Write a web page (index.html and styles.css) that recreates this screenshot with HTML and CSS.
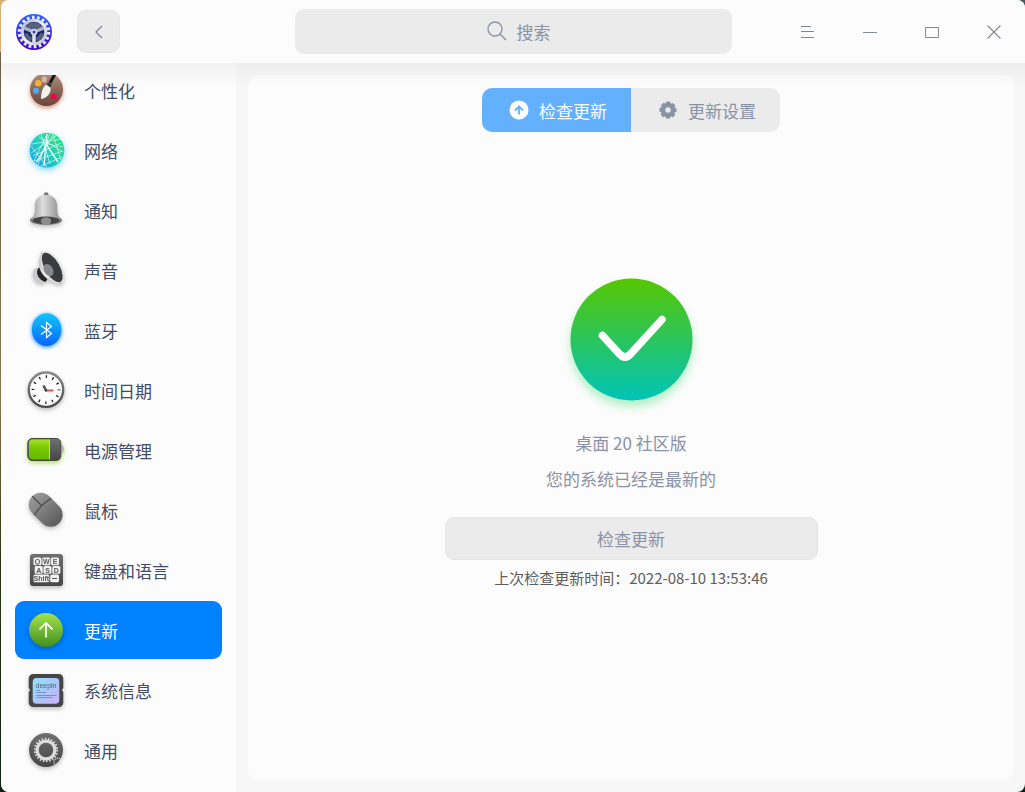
FILE: index.html
```html
<!DOCTYPE html>
<html lang="zh-CN">

    <head>
        <meta charset="utf-8" />
        <meta name="viewport" content="width=device-width, initial-scale=1.0" />
        <title>控制中心</title>

        <link rel="stylesheet" href="styles.css">
    </head>

    <body>
        <!-- Degradados compartidos -->
        <svg class="defs" aria-hidden="true">
            <defs>
                <linearGradient id="g-logo" x2="0" y2="1"><stop offset="0" stop-color="#2a63ff"/><stop offset="1" stop-color="#4a00c8"/></linearGradient>
                <linearGradient id="g-metal" x2="1" y2="1"><stop offset="0" stop-color="#a9b3c4"/><stop offset=".5" stop-color="#eef2f8"/><stop offset="1" stop-color="#b4bccb"/></linearGradient>
                <linearGradient id="g-paleta" x2="0" y2="1"><stop offset="0" stop-color="#ab8e79"/><stop offset="1" stop-color="#6b443a"/></linearGradient>
                <linearGradient id="g-red" x1="1" x2="0" y2="1"><stop offset="0" stop-color="#2fe06f"/><stop offset=".5" stop-color="#25cfb8"/><stop offset="1" stop-color="#159cf5"/></linearGradient>
                <linearGradient id="g-campana" x2="1" y2="0"><stop offset="0" stop-color="#8d8d8d"/><stop offset=".4" stop-color="#dedede"/><stop offset="1" stop-color="#858585"/></linearGradient>
                <linearGradient id="g-bocina" x2="1" y2="1"><stop offset="0" stop-color="#a8a8a8"/><stop offset=".5" stop-color="#efefef"/><stop offset="1" stop-color="#a0a0a0"/></linearGradient>
                <linearGradient id="g-bluetooth" x2="0" y2="1"><stop offset="0" stop-color="#12c6fb"/><stop offset="1" stop-color="#0765ff"/></linearGradient>
                <linearGradient id="g-aro" x2="0" y2="1"><stop offset="0" stop-color="#8a8a8a"/><stop offset="1" stop-color="#4a4a4a"/></linearGradient>
                <linearGradient id="g-pila" x2="0" y2="1"><stop offset="0" stop-color="#a5e02c"/><stop offset=".45" stop-color="#76c900"/><stop offset="1" stop-color="#65b800"/></linearGradient>
                <linearGradient id="g-gris" x2="0" y2="1"><stop offset="0" stop-color="#9a9a9a"/><stop offset="1" stop-color="#5c5c5c"/></linearGradient>
                <linearGradient id="g-oscuro" x2="0" y2="1"><stop offset="0" stop-color="#707070"/><stop offset="1" stop-color="#454545"/></linearGradient>
                <linearGradient id="g-verde" x2="0" y2="1"><stop offset="0" stop-color="#a5e34e"/><stop offset="1" stop-color="#3f8f1f"/></linearGradient>
                <linearGradient id="g-pantalla" x2="1" y2="1"><stop offset="0" stop-color="#8fe3fb"/><stop offset=".5" stop-color="#a9c8fa"/><stop offset="1" stop-color="#ceb2fb"/></linearGradient>
                <linearGradient id="g-listo" x2="0" y2="1"><stop offset="0" stop-color="#56c600"/><stop offset="1" stop-color="#00c4b8"/></linearGradient>
            </defs>
        </svg>

        <div class="ventana">
            <header class="barra">
                <div class="barra_izq">
                    <svg class="logo" viewBox="0 0 36 36" aria-hidden="true">
                        <circle cx="18" cy="18" r="18" fill="url(#g-logo)"/>
                        <circle cx="18" cy="18" r="14.6" fill="none" stroke="#e6eaf8" stroke-width="3.4" stroke-dasharray="2.7 2.396"/>
                        <circle cx="18" cy="18" r="11.8" fill="#1d2370" stroke="url(#g-metal)" stroke-width="3"/>
                        <path d="M9.5 13a10 10 0 0 1 17 0l-4 2.500a8 8 0 0 0-9 0z" fill="#56627c"/>
                        <path d="M8.500 19a10 10 0 0 0 6.500 8.500l1-4a7 7 0 0 1-4-4zM27.500 19a10 10 0 0 1-6.500 8.500l-1-4a7 7 0 0 0 4-4z" fill="#56627c"/>
                        <path d="M18 18L8 14M18 18l10-4" stroke="#a9b2c6" stroke-width="3.200"/>
                        <path d="M18 18v10.500" stroke="#dce2ec" stroke-width="3.600"/>
                        <circle cx="18" cy="18" r="3.400" fill="#c9d0df"/>
                        <circle cx="18" cy="18" r="1.300" fill="#26308e"/>
                    </svg>
                    <button class="boton_atras" aria-label="返回">
                        <svg width="10" height="14" viewBox="0 0 10 14"><path d="M8 1L2 7l6 6" fill="none" stroke="currentColor" stroke-width="1.3"/></svg>
                    </button>
                </div>

                <div class="buscador">
                    <svg class="buscador_icono" width="20" height="20" viewBox="0 0 20 20" aria-hidden="true"><circle cx="8" cy="8" r="7" fill="none" stroke="currentColor" stroke-width="1.3"/><path d="M13 13l6 6" stroke="currentColor" stroke-width="1.4"/></svg>
                    <input class="buscador_campo" type="text" placeholder="搜索" aria-label="搜索">
                </div>

                <div class="controles">
                    <button class="control" aria-label="菜单"><svg width="14" height="14" viewBox="0 0 14 14"><path d="M0 1.500h10M0 6.500h13M0 12.500h13" stroke="currentColor"/></svg></button>
                    <button class="control" aria-label="最小化"><svg width="14" height="14" viewBox="0 0 14 14"><path d="M0 7.500h14" stroke="currentColor"/></svg></button>
                    <button class="control" aria-label="最大化"><svg width="14" height="14" viewBox="0 0 14 14"><path d="M.5 2.500h13v10H.5z" fill="none" stroke="currentColor"/></svg></button>
                    <button class="control" aria-label="关闭"><svg width="14" height="14" viewBox="0 0 14 14"><path d="M.5 .5l13 13M13.500 .5l-13 13" stroke="currentColor" stroke-width="1.100"/></svg></button>
                </div>
            </header>

            <div class="cuerpo">
                <nav class="lateral">
                    <div class="menu">
                        <a class="menu_item" href="#">
                            <svg class="menu_icono menu_icono--rojo" viewBox="0 0 40 40">
                                <circle cx="20.5" cy="19.500" r="16.500" fill="url(#g-paleta)"/>
                                <ellipse cx="18.300" cy="9.500" rx="2.600" ry="3.200" fill="#d8b3a2"/>
                                <circle cx="12.300" cy="13.300" r="3.200" fill="#f9b22e"/>
                                <circle cx="10" cy="20.700" r="3" fill="#4fabf5"/>
                                <circle cx="27.700" cy="26.700" r="3.200" fill="#e40a4a"/>
                                <path d="M15 29c0-5 1-11 5-14.500l4.500 2.800c1 5-3 11-9.500 11.700z" fill="#f6f1ea"/>
                                <path d="M20.500 14.500l2-2 3 2.200-1 2.800z" fill="#333"/>
                                <path d="M24 13l6-11" stroke="#151515" stroke-width="3"/>
                            </svg>
                            <span>个性化</span>
                        </a>
                        <a class="menu_item" href="#">
                            <svg class="menu_icono menu_icono--celeste" viewBox="0 0 40 40">
                                <circle cx="21" cy="20.300" r="17.300" fill="url(#g-red)"/>
                                <g fill="none" stroke="#e9fffb" stroke-width=".8">
                                    <path d="M15 4l9 30M24 3.500L12 35M6 14l30-5M5 23L30 6M10 33L27 5l8 25M13 7L37 22M5 16l16 21M20 6L8 31l29-10M17 13l20 4M15 36L36 27M7 26l28-13" opacity=".8"/>
                                    <path d="M21 4l-3 32M22 12L11 32M20 14l12 18" stroke-width="1.400"/>
                                </g>
                            </svg>
                            <span>网络</span>
                        </a>
                        <a class="menu_item" href="#">
                            <svg class="menu_icono" viewBox="0 0 40 40">
                                <circle cx="20.200" cy="4.500" r="2.300" fill="#777"/>
                                <ellipse cx="20" cy="30.200" rx="16" ry="4.800" fill="#777"/>
                                <path d="M4 29.500c4-2 5-6 5-13C9 8 14 5 20 5s11.200 3 11.200 11.500c0 7 .8 11 4.800 13-8 3.500-24 3.500-32 0z" fill="url(#g-campana)"/>
                                <ellipse cx="20" cy="30.300" rx="13.500" ry="3.700" fill="#444"/>
                                <ellipse cx="20" cy="31" rx="5.200" ry="3.800" fill="#8c8c8c"/>
                            </svg>
                            <span>通知</span>
                        </a>
                        <a class="menu_item" href="#">
                            <svg class="menu_icono" viewBox="0 0 40 40">
                                <path d="M8.500 18.500c-4 5-1 14.500 7.500 15l4-3-7-13z" fill="#c9cad2"/>
                                <path d="M12.500 18c-3.500 4-.5 12 7 14l2-3-6-12z" fill="#262626"/>
                                <path d="M15.500 1.500c-1.500 5-3.500 13-1.500 18 2 5.500 9 13.500 22 14.500z" fill="url(#g-bocina)"/>
                                <ellipse cx="26.200" cy="17.500" rx="8" ry="17.300" transform="rotate(-30 26.200 17.500)" fill="#3a3b3e" stroke="#e3e3e3" stroke-width="1.400"/>
                                <ellipse cx="22.500" cy="20" rx="4.500" ry="6.500" transform="rotate(-30 22.500 20)" fill="#85878b"/>
                            </svg>
                            <span>声音</span>
                        </a>
                        <a class="menu_item" href="#">
                            <svg class="menu_icono menu_icono--azul" viewBox="0 0 40 40">
                                <ellipse cx="20.600" cy="19.700" rx="14.700" ry="16.400" fill="url(#g-bluetooth)"/>
                                <path d="M15 15.500l10.500 8-5 4v-15l5 4-10.500 8" fill="none" stroke="#fff" stroke-width="1.200"/>
                            </svg>
                            <span>蓝牙</span>
                        </a>
                        <a class="menu_item" href="#">
                            <svg class="menu_icono" viewBox="0 0 40 40">
                                <circle cx="20" cy="19.700" r="17.200" fill="#fcfcfc" stroke="url(#g-aro)" stroke-width="2.400"/>
                                <circle cx="20" cy="19.700" r="13" fill="none" stroke="#222" stroke-width="2.800" stroke-dasharray="1.300 5.507" stroke-dashoffset=".65"/>
                                <path d="M20 20.500l-2.500-5" stroke="#555" stroke-width="2.600"/>
                                <path d="M19.500 20.500h8" stroke="#f25050" stroke-width="2"/>
                                <circle cx="20" cy="20.500" r="1.200" fill="#444"/>
                            </svg>
                            <span>时间日期</span>
                        </a>
                        <a class="menu_item" href="#">
                            <svg class="menu_icono menu_icono--lima" viewBox="0 0 40 40">
                                <path d="M35 15c2.500 0 3 2 3 4s-.5 4-3 4z" fill="#bbb"/>
                                <rect x="1.800" y="8.500" width="33" height="22" rx="4.500" fill="url(#g-oscuro)" stroke="#464a3e"/>
                                <path d="M6.500 9.500h17.200v20H6.500a3.500 3.500 0 0 1-3.500-3.500V13a3.500 3.500 0 0 1 3.500-3.500z" fill="url(#g-pila)"/>
                                <path d="M23.500 9.500v20" stroke="#b5ec3e"/>
                            </svg>
                            <span>电源管理</span>
                        </a>
                        <a class="menu_item" href="#">
                            <svg class="menu_icono" viewBox="0 0 40 40">
                                <g transform="rotate(-45 19.700 19.700)">
                                    <rect x="7.700" y="0.700" width="24" height="38" rx="12" fill="url(#g-gris)"/>
                                    <path d="M7.700 15.500c8-2 16-2 24 0M19.700 .7V14" fill="none" stroke="#484848" stroke-width="1.200"/>
                                </g>
                            </svg>
                            <span>鼠标</span>
                        </a>
                        <a class="menu_item" href="#">
                            <svg class="menu_icono" viewBox="0 0 40 40">
                                <rect x="4" y="4" width="33" height="32" rx="3" fill="url(#g-oscuro)"/>
                                <g fill="#f1f1f1">
                                    <rect x="7.500" y="7.500" width="8" height="7.800" rx="1.500"/><rect x="16.300" y="7.500" width="8" height="7.800" rx="1.500"/><rect x="25" y="7.500" width="8" height="7.800" rx="1.500"/>
                                    <rect x="8.700" y="16" width="8" height="7.800" rx="1.500"/><rect x="17.500" y="16" width="8" height="7.800" rx="1.500"/><rect x="26.300" y="16" width="8" height="7.800" rx="1.500"/>
                                    <rect x="7.500" y="24.500" width="15.800" height="7.800" rx="1.500"/><rect x="24.200" y="24.500" width="8.800" height="7.800" rx="1.500"/>
                                </g>
                                <g class="teclas">
                                    <text x="11.500" y="14">Q</text><text x="20.300" y="14">W</text><text x="29" y="14">E</text>
                                    <text x="12.700" y="22.500">A</text><text x="21.500" y="22.500">S</text><text x="30.300" y="22.500">D</text>
                                    <text x="15.400" y="31">Shift</text>
                                </g>
                                <path d="M26 28.500h5" stroke="#555"/>
                            </svg>
                            <span>键盘和语言</span>
                        </a>
                        <a class="menu_item menu_item--activo" href="#" aria-current="page">
                            <svg class="menu_icono" viewBox="0 0 40 40">
                                <circle cx="20" cy="20" r="17" fill="url(#g-verde)"/>
                                <path d="M20 27.500V13.500M13.500 19.300l6.500-6.300 6.500 6.300" fill="none" stroke="#fff" stroke-width="1.700"/>
                            </svg>
                            <span>更新</span>
                        </a>
                        <a class="menu_item" href="#">
                            <svg class="menu_icono" viewBox="0 0 40 40">
                                <path d="M7.200 4h25.600a4.500 4.500 0 0 1 4.500 4.500V18l-1.500 2 1.500 2v10.500a4.500 4.500 0 0 1-4.500 4.500H7.200a4.500 4.500 0 0 1-4.500-4.500V22l1.500-2-1.500-2V8.500A4.500 4.500 0 0 1 7.200 4z" fill="#464646"/>
                                <rect x="6.700" y="8" width="26.600" height="25.700" rx="4" fill="url(#g-pantalla)"/>
                                <text class="marca" x="20" y="17.500">deepin</text>
                                <path d="M10.500 20.500h3.500M10.500 22.500h9.500M10.500 25.500h20M10.500 27.500h16" stroke="#6f7fb5" stroke-width=".8"/>
                            </svg>
                            <span>系统信息</span>
                        </a>
                        <a class="menu_item" href="#">
                            <svg class="menu_icono" viewBox="0 0 40 40">
                                <circle cx="20" cy="20" r="17" fill="url(#g-oscuro)"/>
                                <circle cx="20" cy="20" r="8.900" fill="none" stroke="#dedede" stroke-width="3.200"/>
                                <circle cx="20" cy="20" r="11.200" fill="none" stroke="#dedede" stroke-width="2" stroke-dasharray="1.500 1.699"/>
                                <path d="M28.500 34a4 4 0 0 1 6-5" fill="none" stroke="#aaa" stroke-width="1.600" stroke-dasharray="1.500 .7"/>
                            </svg>
                            <span>通用</span>
                        </a>
                    </div>
                </nav>

                <main class="panel">
                    <div class="pestanas">
                        <button class="pestana pestana--activa">
                            <svg width="20" height="20" viewBox="0 0 20 20" aria-hidden="true"><circle cx="10" cy="10" r="9.500" fill="#fff"/><path d="M10 14.500V7M6 10.500l4-4 4 4" fill="none" stroke="#63b0ff" stroke-width="1.800"/></svg>
                            检查更新
                        </button>
                        <button class="pestana">
                            <svg width="20" height="20" viewBox="0 0 20 20" aria-hidden="true"><circle cx="10" cy="10" r="5" fill="none" stroke="currentColor" stroke-width="4.600"/><circle cx="10" cy="10" r="7.700" fill="none" stroke="currentColor" stroke-width="1.800" stroke-dasharray="4.200 1.847" stroke-dashoffset="2.100"/></svg>
                            更新设置
                        </button>
                    </div>

                    <section class="estado">
                        <svg class="estado_icono" viewBox="0 0 123 123" aria-hidden="true">
                            <circle cx="61.500" cy="61.500" r="61" fill="url(#g-listo)"/>
                            <path d="M32.500 57.500L50 76.500q5 5 10 0L92 41.500" fill="none" stroke="#fff" stroke-width="7.600" stroke-linecap="round"/>
                        </svg>
                        <p class="estado_texto">桌面 20 社区版</p>
                        <p class="estado_texto">您的系统已经是最新的</p>
                        <button class="boton_revisar">检查更新</button>
                        <p class="estado_fecha">上次检查更新时间：2022-08-10 13:53:46</p>
                    </section>
                </main>
            </div>
        </div>
    </body>

</html>
```
FILE: styles.css
```css
* {
    padding: 0;
    margin: 0;
    box-sizing: border-box;
}

body {
    height: 100vh;
    padding-left: 1px;
    font-family: "Noto Sans CJK SC", sans-serif;
    font-size: 17px;
    color: #414d68;
    background: linear-gradient(to right, transparent 50%, #46585f 50%) top / 100% 50% no-repeat,
        linear-gradient(#d9b074 0, #d9b074 52px, #6e5d48 52px, #8d7650 400px, #2c3510 560px, #0c2115 100%);
}

button,
input {
    font: inherit;
    border: none;
}

button {
    cursor: pointer;
}

.defs {
    position: absolute;
    width: 0;
    height: 0;
}

.ventana {
    display: flex;
    flex-direction: column;
    height: 100%;
    overflow: hidden;
    background-color: #f7f7f7;
    border-radius: 8px;
}

/* BARRA SUPERIOR */
.barra {
    position: relative;
    display: grid;
    grid-template-columns: 1fr minmax(200px, 437px) 1fr;
    align-items: center;
    height: 63px;
    flex-shrink: 0;
    background-color: #fcfcfc;
}

/* sombra sobre el contenido */
.barra::after {
    content: "";
    position: absolute;
    top: 100%;
    left: 0;
    right: 0;
    height: 24px;
    background: linear-gradient(rgba(0, 0, 0, .04), rgba(0, 0, 0, 0));
    pointer-events: none;
}

.barra_izq {
    display: flex;
    align-items: center;
    gap: 25px;
    padding-left: 15px;
}

.logo {
    width: 36px;
    height: 36px;
}

.boton_atras {
    display: flex;
    justify-content: center;
    align-items: center;
    width: 43px;
    height: 43px;
    color: #7f8798;
    background-color: #ebebeb;
    border: 1px solid #e5e5e5;
    border-radius: 9px;
}

.buscador {
    position: relative;
    color: #8a92a5;
}

.buscador_icono {
    position: absolute;
    top: 12px;
    left: calc(50% - 26px);
}

.buscador_campo {
    display: block;
    width: 100%;
    height: 45px;
    padding-left: 41px;
    text-align: center;
    color: #414d68;
    background-color: #ebebeb;
    border-radius: 9px;
}

.buscador_campo::placeholder {
    color: #8a92a5;
    opacity: 1;
}

.controles {
    display: flex;
    justify-content: flex-end;
}

.control {
    display: flex;
    justify-content: center;
    align-items: center;
    width: 62px;
    height: 63px;
    color: #7f879b;
    background: transparent;
}

/* MENU LATERAL */
.cuerpo {
    display: flex;
    flex: 1;
    min-height: 0;
}

.lateral {
    width: 235px;
    flex-shrink: 0;
    padding-top: 12px;
    background-color: #fcfcfc;
}

.menu {
    display: flex;
    flex-direction: column;
    gap: 2px;
    height: 100%;
    padding: 0 14px;
    overflow: hidden;
}

.menu_item {
    display: flex;
    align-items: center;
    gap: 18px;
    height: 58px;
    flex-shrink: 0;
    padding-left: 11px;
    color: #414d68;
    text-decoration: none;
    border-radius: 9px;
}

/* lista desplazada: el primer elemento queda cortado */
.menu_item:first-child {
    margin-top: -14px;
}

.menu_item--activo {
    color: #fff;
    background-color: #0081ff;
}

.menu_icono {
    width: 40px;
    height: 40px;
    overflow: visible;
    filter: drop-shadow(0 2px 2px rgba(0, 0, 0, .25));
}

.menu_icono--rojo {
    filter: drop-shadow(0 2px 2px rgba(190, 80, 50, .6));
}

.menu_icono--celeste {
    filter: drop-shadow(0 2px 3px rgba(30, 190, 240, .6));
}

.menu_icono--azul {
    filter: drop-shadow(0 1px 2px rgba(0, 120, 255, .9));
}

.menu_icono--lima {
    filter: drop-shadow(0 2px 2px rgba(130, 200, 0, .6));
}

.teclas {
    font: bold 7px "Liberation Sans", sans-serif;
    text-anchor: middle;
    fill: #555;
}

.marca {
    font: 7px "Liberation Sans", sans-serif;
    text-anchor: middle;
    fill: #4d6077;
}

/* PANEL */
.panel {
    display: flex;
    flex-direction: column;
    align-items: center;
    flex: 1;
    margin: 12px 11px 12px 12px;
    padding-top: 13px;
    background-color: #fcfcfc;
    border-radius: 10px;
}

.pestanas {
    display: flex;
    overflow: hidden;
    border-radius: 10px;
}

.pestana {
    display: flex;
    justify-content: center;
    align-items: center;
    gap: 10px;
    width: 149px;
    height: 44px;
    padding-left: 3px;
    color: #8a92a5;
    background-color: #ebebeb;
}

.pestana--activa {
    color: #fff;
    background-color: #63b0ff;
}

.estado {
    display: flex;
    flex-direction: column;
    align-items: center;
    width: 100%;
    margin-top: 146px;
}

.estado_icono {
    width: 123px;
    height: 123px;
    margin-bottom: 24px;
    overflow: visible;
    filter: drop-shadow(0 6px 5px rgba(60, 220, 110, .4));
}

.estado_texto {
    line-height: 36px;
    color: #8a92a5;
}

.boton_revisar {
    width: 100%;
    max-width: 373px;
    height: 43px;
    margin-top: 20px;
    color: #8a92a5;
    background-color: #ebebeb;
    border: 1px solid #e5e5e5;
    border-radius: 9px;
}

.estado_fecha {
    margin-top: 6px;
    font-size: 15px;
    line-height: 24px;
    color: #5c5c5c;
}
```
